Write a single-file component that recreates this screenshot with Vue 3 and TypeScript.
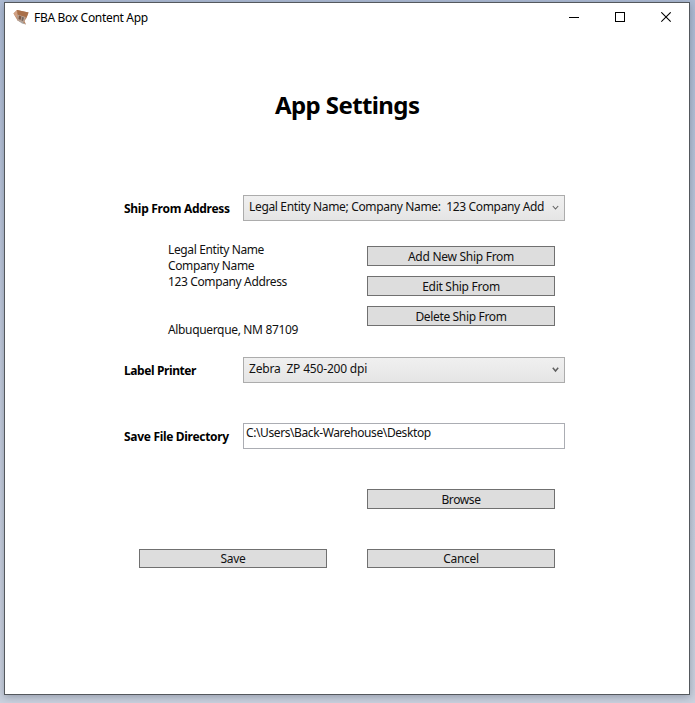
<script setup lang="ts">
import { ref } from 'vue'

interface FittedText {
  text: string
  fit: string
}

const shipFrom = ref('Legal Entity Name; Company Name:  123 Company Add')
const printer = ref('Zebra  ZP 450-200 dpi')
const directory = ref('C:\\Users\\Back-Warehouse\\Desktop')

const address: FittedText[] = [
  { text: 'Legal Entity Name', fit: 't37' },
  { text: 'Company Name', fit: 't37' },
  { text: '123 Company Address', fit: 't37' },
  { text: '', fit: '' },
  { text: '', fit: '' },
  { text: 'Albuquerque, NM 87109', fit: 't34' },
]

const shipActions: FittedText[] = [
  { text: 'Add New Ship From', fit: 't28' },
  { text: 'Edit Ship From', fit: 't28' },
  { text: 'Delete Ship From', fit: 't34' },
]
</script>

<template>
  <div class="desktop">
    <main class="window">
      <header class="titlebar">
        <svg class="app-icon" width="16" height="16" viewBox="0 0 16 16">
          <path d="M0.5 4.5 4 1 15.5 3.5 13.5 9 11.5 12 13 15.5 9.5 14 4.5 11.5Z" fill="#b98461" />
          <path d="M4 1 15.5 3.5 13.5 8.5 4 5.5Z" fill="#a96f48" />
          <path d="M0.5 4.5 4 1 4.5 5.5 3.5 9Z" fill="#d1a184" />
          <path d="M4 5.5 12.5 8 11.5 12 9.5 14 4.5 11.5Z" fill="#b8a091" />
          <path d="M6 6.5 8.5 7.5 7.5 11 5.5 10Z" fill="#7b5845" />
          <path d="M9 8 11 8.5 10 12 8.5 11.5Z" fill="#76665e" />
          <path d="M5 11.5 9.5 13 13 15.5 9 14.5Z" fill="#aaa7a5" />
        </svg>
        <span class="caption t31">FBA Box Content App</span>
        <div class="controls">
          <svg width="11" height="11" viewBox="0 0 11 11"><path d="M0.5 5.5H9.5" stroke="#000" fill="none" stroke-linecap="square" shape-rendering="crispEdges" /></svg>
          <svg width="11" height="11" viewBox="0 0 11 11"><rect x="0.5" y="0.5" width="9" height="9" stroke="#000" fill="none" /></svg>
          <svg width="11" height="11" viewBox="0 0 11 11"><path d="M0.3 0.3 9.7 9.7M9.7 0.3 0.3 9.7" stroke="#000" stroke-width="1.1" fill="none" /></svg>
        </div>
      </header>

      <h1 class="heading">App Settings</h1>

      <form class="form" @submit.prevent>
        <div class="row">
          <label class="label t28">Ship From Address</label>
          <div class="combo">
            <span class="t34">{{ shipFrom }}</span>
            <svg class="chevron" width="7" height="6" viewBox="0 0 7 6"><path d="M0.8 1 3.5 4 6.2 1" stroke="#606060" stroke-width="1.1" fill="none" /></svg>
          </div>
        </div>

        <div class="details">
          <div class="address">
            <div v-for="(line, i) in address" :key="i" class="line" :class="line.fit">{{ line.text }}</div>
          </div>
          <div class="stack">
            <button v-for="a in shipActions" :key="a.text" type="button" class="btn" :class="a.fit">{{ a.text }}</button>
          </div>
        </div>

        <div class="row">
          <label class="label t40">Label Printer</label>
          <div class="combo">
            <span class="t18">{{ printer }}</span>
            <svg class="chevron" width="7" height="6" viewBox="0 0 7 6"><path d="M0.8 0.8 3.5 4 6.2 0.8" stroke="#606060" stroke-width="1.5" fill="none" /></svg>
          </div>
        </div>

        <div class="row directory">
          <label class="label t31">Save File Directory</label>
          <div class="textbox t40">{{ directory }}</div>
        </div>

        <div class="browse">
          <button type="button" class="btn t40">Browse</button>
        </div>

        <div class="actions">
          <button type="submit" class="btn short t34">Save</button>
          <button type="button" class="btn short t28">Cancel</button>
        </div>
      </form>
    </main>
  </div>
</template>

<style>
body {
  margin: 0;
}
</style>

<style scoped>
.desktop {
  box-sizing: border-box;
  width: 695px;
  height: 703px;
  padding: 2px 5px 8px 4px;
  overflow: hidden;
  background: linear-gradient(#aebcd4, #c2cbdc 50%, #cbd2df);
  font: 12px/16px "Noto Sans", "Open Sans", sans-serif;
  color: #111;
}
.window {
  box-sizing: border-box;
  height: 693px;
  border: 1px solid #54585d;
  background: #fff;
  box-shadow: 0 2px 8px rgba(20, 30, 50, 0.3);
}
.titlebar {
  display: flex;
  height: 30px;
  padding-left: 8px;
}
.app-icon {
  margin-top: 6px;
}
.caption {
  margin: 7px 0 0 5px;
  color: #000;
}
.controls {
  display: flex;
  gap: 35px;
  margin: 9px 17px 0 auto;
}
.heading {
  margin: 56px 0 0;
  padding-left: 270px;
  font-size: 24px;
  line-height: 32px;
  letter-spacing: -0.6px;
  color: #000;
}
.form {
  width: 441px;
  margin: 74px 0 0 119px;
}
.row {
  display: grid;
  grid-template-columns: 119px 322px;
  height: 26px;
}
.label {
  padding-top: 6px;
  font-weight: 700;
  color: #000;
}
.combo {
  display: flex;
  justify-content: space-between;
  box-sizing: border-box;
  padding: 3px 5px 0;
  border: 1px solid #acacac;
  background: linear-gradient(#f0f0f0, #e5e5e5);
  white-space: pre;
}
.chevron {
  margin-top: 6px;
}
.details {
  display: flex;
  height: 136px;
  padding-left: 44px;
}
.address {
  width: 199px;
  padding-top: 21px;
}
.line {
  height: 16px;
}
.stack {
  display: flex;
  flex-direction: column;
  gap: 10px;
  padding-top: 25px;
}
.btn {
  box-sizing: border-box;
  width: 188px;
  height: 20px;
  padding: 2px 0 0;
  border: 1px solid #707070;
  border-radius: 0;
  background: #ddd;
  color: #111;
  font-family: inherit;
  font-size: 12px;
  line-height: 16px;
  text-align: center;
}
.short {
  height: 19px;
  padding-top: 1px;
}
.directory {
  margin-top: 40px;
}
.textbox {
  box-sizing: border-box;
  padding: 1px 0 0 2px;
  border: 1px solid #abadb3;
  background: #fff;
}
.browse {
  display: flex;
  margin: 40px 0 0 243px;
}
.actions {
  display: flex;
  gap: 40px;
  margin: 40px 0 0 15px;
}
.t18 { letter-spacing: -0.18px; }
.t28 { letter-spacing: -0.28px; }
.t31 { letter-spacing: -0.31px; }
.t34 { letter-spacing: -0.34px; }
.t37 { letter-spacing: -0.37px; }
.t40 { letter-spacing: -0.4px; }
</style>
